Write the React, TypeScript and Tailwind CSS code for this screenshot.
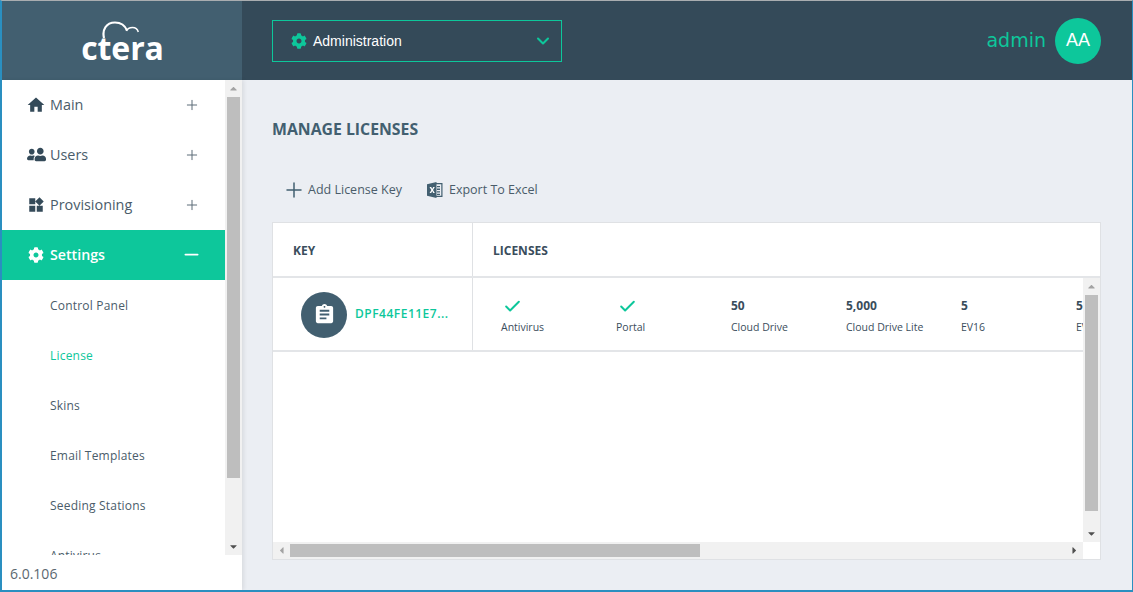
import { FaUserFriends, FaCog, FaCaretUp, FaCaretDown, FaCaretLeft, FaCaretRight } from "react-icons/fa";
import { MdWidgets, MdAssignment, MdHome } from "react-icons/md";
import { ChevronDown, Plus, Minus, Check } from "lucide-react";

const mainNav = [
  { label: "Main", icon: <MdHome className="shrink-0 text-[20px]" /> },
  { label: "Users", icon: <FaUserFriends className="shrink-0 text-[19px] -scale-x-100" /> },
  { label: "Provisioning", icon: <MdWidgets className="shrink-0 text-[18px]" /> },
];
const subNav = ["Control Panel", "License", "Skins", "Email Templates", "Seeding Stations", "Antivirus"];
const licenses = [
  { check: true, label: "Antivirus" },
  { check: true, label: "Portal" },
  { value: "50", label: "Cloud Drive" },
  { value: "5,000", label: "Cloud Drive Lite" },
  { value: "5", label: "EV16" },
  { value: "5", label: "EV32" },
];

function ExcelIcon() {
  return (
    <svg viewBox="0 0 16 16" className="ml-[25px] h-[16px] w-[16px] text-[#425f70]">
      <path fill="currentColor" d="M9 1h6.5v14H9v-1.2h5.3V2.2H9z" />
      <path fill="currentColor" d="M10 4h3v1.3h-3zM10 6.6h3v1.3h-3zM10 9.2h3v1.3h-3zM10 11.7h3V13h-3z" />
      <path fill="currentColor" d="M0 2.2 9.5 0v16L0 13.8z" />
      <path fill="white" d="M2.5 5h1.7l1 2 1-2h1.6L6 8l1.8 3H6.2l-1-2-1 2H2.6l1.8-3z" />
    </svg>
  );
}

export default function App() {
  return (
    <div className="flex h-[592px] w-[1133px] flex-col overflow-hidden border-t border-r border-b-2 border-l-2 border-t-[#a9adb0] border-r-[#2a8fc0] border-b-[#2a8fc0] border-l-[#2a8fc0] bg-[#ebeef3] font-['Open_Sans',sans-serif] text-[#3a4d5c]">
      <div className="flex h-[79px] shrink-0 bg-[#344a59]">
        <div className="flex w-[240px] shrink-0 items-center justify-center bg-[#425f70] pl-[1px]">
          <div className="relative mt-[14px] text-[32px] leading-[36px] font-bold tracking-[-0.1px] text-white">
            ctera
            <svg viewBox="0 0 37 18" className="absolute top-[-9px] left-[21px] h-[18px] w-[37px]" fill="none" stroke="white" strokeWidth="2.2">
              <path d="M2 17C0 9 4 1.5 13 1.5c6 0 10 3 12 8" />
              <path d="M24.500 10c1-2.500 3-3.500 6-3.500 3 0 5 1.500 5.800 4.500" strokeWidth="1.500" />
            </svg>
          </div>
        </div>
        <div className="flex flex-1 items-center justify-between pr-[31px] pl-[30px]">
          <div className="flex h-[42px] w-[290px] items-center border border-[#0dc79b] pr-[8px] pl-[18px] font-['Liberation_Sans',sans-serif] text-[14px] text-white">
            <FaCog className="mr-[6px] text-[16px] text-[#0dc79b]" />
            <span className="flex-1 pt-[1px]">Administration</span>
            <ChevronDown className="h-[20px] w-[20px] text-[#0dc79b]" strokeWidth={2.5} />
          </div>
          <div className="flex items-center gap-[9px]">
            <span className="font-['DejaVu_Sans',sans-serif] text-[19px] text-[#0dc79b]">admin</span>
            <div className="flex h-[46px] w-[46px] items-center justify-center rounded-full bg-[#0dc79b] font-['Liberation_Sans',sans-serif] text-[18px] text-white">AA</div>
          </div>
        </div>
      </div>

      <div className="flex min-h-0 flex-1">
        <aside className="z-10 flex w-[240px] shrink-0 flex-col bg-white shadow-[2px_0_4px_rgba(0,0,0,0.08)]">
          <div className="flex h-[475px] shrink-0">
            <nav className="min-w-0 flex-1 overflow-hidden">
              {mainNav.map((n) => (
                <div key={n.label} className="flex h-[50px] items-center pr-[25px] pb-[1px] pl-[26px] text-[14.4px] text-[#4a5c6a]">
                  <span className="mr-[6px] flex w-[16px] justify-center text-[#344a59]">{n.icon}</span>
                  <span className="flex-1">{n.label}</span>
                  <Plus className="h-[16px] w-[16px] text-[#5c6c78]" strokeWidth={1.5} />
                </div>
              ))}
              <div className="flex h-[50px] items-center bg-[#0dc79b] pr-[23px] pb-[1px] pl-[26px] text-[14.2px] font-semibold text-white">
                <span className="mr-[6px] flex w-[16px] justify-center"><FaCog className="shrink-0 text-[16px]" /></span>
                <span className="flex-1">Settings</span>
                <Minus className="h-[21px] w-[21px]" strokeWidth={2} />
              </div>
              {subNav.map((s) => (
                <div key={s} className={`flex h-[50px] items-center pt-[2px] pl-[48px] text-[12px] font-medium tracking-[0.2px] ${s === "License" ? "text-[#0dc79b]" : "text-[#4a5c6a]"}`}>
                  {s}
                </div>
              ))}
            </nav>
            <div className="flex w-[17px] shrink-0 flex-col items-center bg-[#f1f1f1] text-[#a3a3a3]">
              <div className="flex h-[17px] items-center justify-center"><FaCaretUp className="text-[11px]" /></div>
              <div className="h-[381px] w-[13px] bg-[#bebebe]" />
              <div className="flex-1" />
              <div className="flex h-[17px] items-center justify-center text-[#505050]"><FaCaretDown className="text-[11px]" /></div>
            </div>
          </div>
          <div className="flex flex-1 items-center pt-[1px] pl-[8px] text-[14px] text-[#5c6870]">6.0.106</div>
        </aside>

        <main className="flex min-w-0 flex-1 flex-col pt-[38px] pr-[31px] pl-[30px]">
          <h1 className="text-[15.800px] leading-[22px] font-bold text-[#425f70]">MANAGE LICENSES</h1>
          <div className="mt-[38px] flex h-[24px] items-center text-[12.500px] font-medium text-[#4a5c6a]">
            <Plus className="ml-[10px] h-[24px] w-[24px] text-[#425f70]" strokeWidth={1.5} />
            <span className="ml-[2px]">Add License Key</span>
            <ExcelIcon />
            <span className="ml-[6px]">Export To Excel</span>
          </div>
          <section className="mt-[20px] flex h-[338px] flex-col border border-[#dfe1e4] bg-white">
            <div className="flex h-[55px] shrink-0 border-b-2 border-[#e3e5e8] text-[12px] font-bold text-[#3a4d5c]">
              <div className="flex w-[200px] items-center border-r border-[#dfe1e4] pt-[2px] pl-[20px]">KEY</div>
              <div className="flex items-center pt-[2px] pl-[20px]">LICENSES</div>
            </div>
            <div className="flex min-h-0 flex-1">
              <div className="min-w-0 flex-1 overflow-hidden">
                <div className="flex h-[74px] border-b-2 border-[#e3e5e8]">
                  <div className="flex w-[200px] shrink-0 items-center border-r border-[#dfe1e4] pl-[28px]">
                    <div className="mt-[1px] flex h-[46px] w-[46px] items-center justify-center rounded-full bg-[#425f70]">
                      <MdAssignment className="text-[23px] text-white" />
                    </div>
                    <span className="ml-[8px] text-[12px] font-semibold tracking-[0.5px] text-[#0dc79b]">DPF44FE11E7...</span>
                  </div>
                  <div className="flex pl-[28px]">
                    {licenses.map((l, i) => (
                      <div key={i} className="w-[115px] shrink-0 pt-[18px] text-[10.5px] leading-[14px] whitespace-nowrap text-[#3a4d5c]">
                        <div className="flex h-[20px] items-center text-[12px] font-bold">
                          {l.check ? <Check className="ml-[2px] h-[19px] w-[19px] shrink-0 text-[#0dc79b]" strokeWidth={2.5} /> : l.value}
                        </div>
                        <div className="mt-[4px]">{l.label}</div>
                      </div>
                    ))}
                  </div>
                </div>
              </div>
              <div className="flex w-[17px] shrink-0 flex-col items-center bg-[#f1f1f1] text-[#a3a3a3]">
                <div className="flex h-[17px] items-center justify-center"><FaCaretUp className="text-[11px]" /></div>
                <div className="h-[216px] w-[13px] bg-[#bebebe]" />
                <div className="flex-1" />
                <div className="flex h-[17px] items-center justify-center text-[#505050]"><FaCaretDown className="text-[11px]" /></div>
              </div>
            </div>
            <div className="flex h-[17px] shrink-0">
              <div className="flex flex-1 items-center bg-[#f1f1f1] text-[#a3a3a3]">
                <div className="flex w-[17px] justify-center"><FaCaretLeft className="text-[11px]" /></div>
                <div className="h-[13px] w-[410px] bg-[#bebebe]" />
                <div className="flex-1" />
                <div className="flex w-[17px] justify-center text-[#505050]"><FaCaretRight className="text-[11px]" /></div>
              </div>
              <div className="w-[17px] bg-white" />
            </div>
          </section>
        </main>
      </div>
    </div>
  );
}
